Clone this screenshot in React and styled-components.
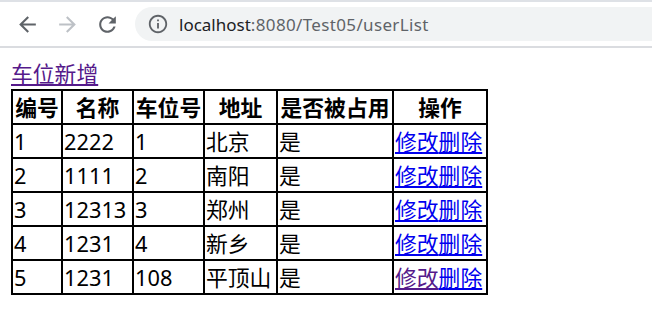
import React from 'react'
import styled, { createGlobalStyle } from 'styled-components'

const GlobalStyle = createGlobalStyle`
  html, body {
    margin: 0;
    padding: 0;
    background: #fff;
  }
`;

const BrowserBar = styled.div`
  display: flex;
  align-items: center;
  height: 44px;
  border-top: 2px solid #dee1e6;
  border-bottom: 2px solid #dadce0;
  background: #fff;
  padding-left: 7px;
`;

const NavButton = styled.span`
  display: flex;
  align-items: center;
  justify-content: center;
  width: 40px;
  height: 34px;
  color: ${p => (p.$disabled ? '#bdc1c6' : '#5f6368')};
`;

const AddressPill = styled.div`
  display: flex;
  align-items: center;
  flex: 1;
  height: 34px;
  margin-left: 8px;
  border-radius: 17px 0 0 17px;
  background: #f1f3f4;
  padding-left: 12px;
  color: #5f6368;
`;

const UrlText = styled.span`
  margin-left: 10px;
  font-family: "Noto Sans", "Open Sans", sans-serif;
  font-size: 17px;
  color: #5f6368;
  letter-spacing: 0.35px;
`;

const Host = styled.span`
  color: #202124;
  letter-spacing: 0;
`;

const Page = styled.div`
  padding: 11px 0 0 11px;
  font-family: "Noto Sans", "Noto Sans CJK SC", sans-serif;
  font-size: 21.8px;
  color: #000;
`;

const TopLink = styled.a`
  display: block;
  width: fit-content;
  line-height: 30px;
  color: #551a8b;
  text-decoration: underline;
`;

const Table = styled.table`
  table-layout: fixed;
  width: 477px;
  border: 1px solid #000;
  border-collapse: separate;
  border-spacing: 0;
  font-size: 21.8px;
`;

const HeadCell = styled.th`
  box-sizing: border-box;
  width: ${p => p.$w}px;
  height: 34px;
  padding: 1px;
  border: 1px solid #000;
  font-weight: bold;
  text-align: center;
  line-height: 29px;
  white-space: nowrap;
`;

const Cell = styled.td`
  box-sizing: border-box;
  height: 34px;
  padding: 1px;
  border: 1px solid #000;
  line-height: 29px;
  white-space: nowrap;
  overflow: hidden;
`;

const ActionLink = styled.a`
  color: ${p => (p.$visited ? '#551a8b' : '#0000ee')};
  text-decoration: underline;
`;

const columns = [
  { title: '编号', w: 50 },
  { title: '名称', w: 71 },
  { title: '车位号', w: 71 },
  { title: '地址', w: 73 },
  { title: '是否被占用', w: 116 },
  { title: '操作', w: 94 },
]

const rows = [
  { id: 1, name: '2222', no: '1', addr: '北京', used: '是' },
  { id: 2, name: '1111', no: '2', addr: '南阳', used: '是' },
  { id: 3, name: '12313', no: '3', addr: '郑州', used: '是' },
  { id: 4, name: '1231', no: '4', addr: '新乡', used: '是' },
  { id: 5, name: '1231', no: '108', addr: '平顶山', used: '是', visited: true },
]

const Icon = ({ d, size = 25 }) => (
  <svg width={size} height={size} viewBox="0 0 24 24" fill="currentColor">
    <path d={d} />
  </svg>
)

const ICONS = {
  back: 'M20 11H7.83l5.59-5.59L12 4l-8 8 8 8 1.41-1.41L7.83 13H20v-2z',
  forward: 'M12 4l-1.41 1.41L16.17 11H4v2h12.17l-5.58 5.59L12 20l8-8z',
  reload: 'M17.65 6.35C16.2 4.9 14.21 4 12 4c-4.42 0-7.99 3.58-7.99 8s3.57 8 7.99 8c3.73 0 6.84-2.55 7.73-6h-2.08c-.82 2.33-3.04 4-5.650 4-3.31 0-6-2.69-6-6s2.69-6 6-6c1.66 0 3.14.69 4.22 1.78L13 11h7V4l-2.35 2.35z',
  info: 'M11 7h2v2h-2zm0 4h2v6h-2zm1-9C6.48 2 2 6.48 2 12s4.480 10 10 10 10-4.48 10-10S17.52 2 12 2zm0 18c-4.41 0-8-3.590-8-8s3.59-8 8-8 8 3.59 8 8-3.59 8-8 8z',
}

export default function App() {
  return (
    <>
      <GlobalStyle />
      <BrowserBar>
        <NavButton><Icon d={ICONS.back} /></NavButton>
        <NavButton $disabled><Icon d={ICONS.forward} /></NavButton>
        <NavButton><Icon d={ICONS.reload} /></NavButton>
        <AddressPill>
          <Icon d={ICONS.info} size={22} />
          <UrlText><Host>localhost</Host>:8080/Test05/userList</UrlText>
        </AddressPill>
      </BrowserBar>
      <Page>
        <TopLink href="#">车位新增</TopLink>
        <Table>
          <thead>
            <tr>
              {columns.map(c => (
                <HeadCell key={c.title} $w={c.w}>{c.title}</HeadCell>
              ))}
            </tr>
          </thead>
          <tbody>
            {rows.map(r => (
              <tr key={r.id}>
                <Cell>{r.id}</Cell>
                <Cell>{r.name}</Cell>
                <Cell>{r.no}</Cell>
                <Cell>{r.addr}</Cell>
                <Cell>{r.used}</Cell>
                <Cell>
                  <ActionLink href="#" $visited={r.visited}>修改</ActionLink>
                  <ActionLink href="#">删除</ActionLink>
                </Cell>
              </tr>
            ))}
          </tbody>
        </Table>
      </Page>
    </>
  )
}
